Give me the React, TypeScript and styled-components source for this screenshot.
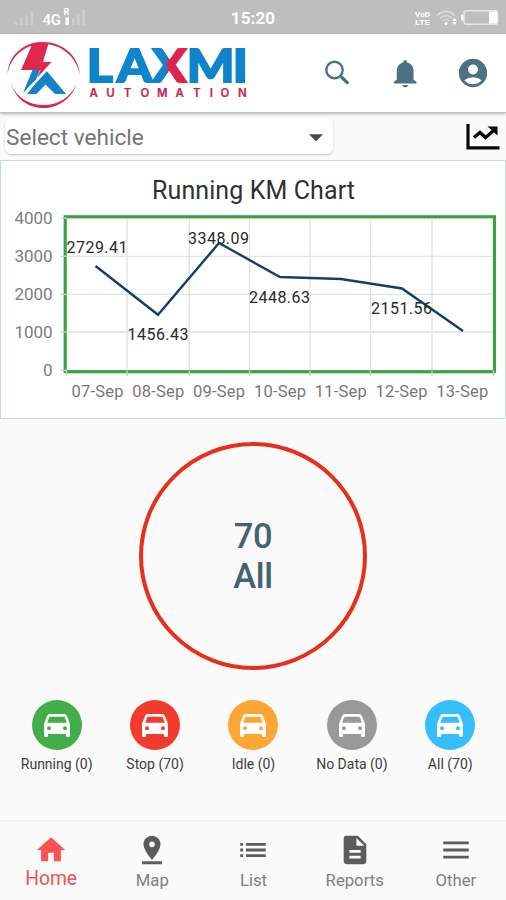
import React from "react";
import styled, { createGlobalStyle } from "styled-components";
import {
  MdAccountCircle,
  MdArrowDropDown,
  MdDescription,
  MdHome,
  MdList,
  MdMenu,
  MdPinDrop,
} from "react-icons/md";

const GlobalStyle = createGlobalStyle`
  *, *::before, *::after { box-sizing: border-box; }
  body { margin: 0; background: #fafafa; font-family: Roboto, "Liberation Sans", sans-serif; }
`;

const Screen = styled.div`
  width: 506px;
  height: 900px;
  display: flex;
  flex-direction: column;
  background: #fafafa;
  overflow: hidden;
`;

const StatusBar = styled.header`
  height: 34px;
  flex: none;
  display: grid;
  grid-template-columns: 1fr auto 1fr;
  align-items: center;
  padding: 2px 4px 0 12px;
  background: #bebebe;
  color: #fff;
`;

const Clock = styled.time`
  font-size: 17px;
  font-weight: 700;
  letter-spacing: 0.1px;
  margin: 0 4px 0 -4px;
`;

const StatusRight = styled.div`
  justify-self: end;
  display: flex;
`;

const AppBar = styled.div`
  height: 79px;
  flex: none;
  display: flex;
  align-items: center;
  justify-content: space-between;
  padding: 0 16px 0 0;
  background: #fff;
  border-bottom: 1px solid #c2c2c2;
  box-shadow: 0 1px 3px rgba(0, 0, 0, 0.28);
  z-index: 1;
`;

const Actions = styled.div`
  display: flex;
  gap: 34px;
  color: #4b7182;
`;

const IconButton = styled.button`
  display: flex;
  padding: 0;
  border: 0;
  background: none;
  color: inherit;
`;

const FilterRow = styled.div`
  height: 47px;
  flex: none;
  display: flex;
  align-items: flex-start;
  justify-content: space-between;
  padding: 5px 6px 0 5px;
`;

const Select = styled.div`
  width: 328px;
  height: 36px;
  display: flex;
  align-items: center;
  justify-content: space-between;
  padding: 2px 0 0 1px;
  border-radius: 6px;
  background: #fff;
  box-shadow: 0 1px 2px rgba(0, 0, 0, 0.22);
  color: #747474;
  font-size: 22.6px;
`;

const Arrow = styled(MdArrowDropDown)`
  color: #4a4a4a;
`;

const Trend = styled.div`
  display: flex;
  padding-top: 4px;
`;

const ChartCard = styled.section`
  height: 259px;
  flex: none;
  border: 1.5px solid #cbdfcd;
  background: #fff;
`;

const Summary = styled.section`
  flex: 1;
  display: flex;
  justify-content: center;
  padding-top: 23px;
`;

const Ring = styled.div`
  width: 228px;
  height: 228px;
  display: flex;
  flex-direction: column;
  align-items: center;
  justify-content: center;
  border: 4.4px solid #e6301b;
  border-radius: 50%;
  color: #45626e;
  font-size: 34.5px;
  line-height: 40px;
  font-weight: 500;
  letter-spacing: -0.4px;
  text-align: center;
`;

const StatusList = styled.ul`
  height: 120px;
  flex: none;
  display: grid;
  grid-template-columns: repeat(5, 98.4px);
  margin: 0;
  padding: 0 0 0 7.5px;
  list-style: none;
`;

const StatusItem = styled.li`
  display: flex;
  flex-direction: column;
  align-items: center;
  gap: 5px;
  color: #3d3d3d;
  font-size: 14px;
  line-height: 18px;
  white-space: nowrap;
`;

const Badge = styled.span<{ $color: string }>`
  width: 50px;
  height: 50px;
  display: flex;
  align-items: center;
  justify-content: center;
  border-radius: 50%;
  background: ${({ $color }) => $color};
  color: #fff;
`;

const BottomNav = styled.nav`
  height: 80px;
  flex: none;
  display: grid;
  grid-template-columns: repeat(5, 1fr);
  border-top: 2px solid #f3f3f3;
`;

const NavItem = styled.a<{ $active?: boolean }>`
  display: flex;
  flex-direction: column;
  align-items: center;
  padding: 11px 0 0 1px;
  color: ${({ $active }) => ($active ? "#ff5252" : "#5c5c5c")};
`;

const NavLabel = styled.span<{ $active?: boolean }>`
  margin-top: ${({ $active }) => ($active ? "1px" : "3px")};
  color: ${({ $active }) => ($active ? "#ee5355" : "#808080")};
  font-size: ${({ $active }) => ($active ? "19.3px" : "16.7px")};
  line-height: 22px;
`;

const points: [number, number][] = [
  [95.5, 266], [158, 314.8], [219, 243], [280, 277], [341, 279], [402, 288.5], [463, 331],
];
const dates = ["07-Sep", "08-Sep", "09-Sep", "10-Sep", "11-Sep", "12-Sep", "13-Sep"];
const values = [
  { text: "2729.41", x: 97, y: 252.5 },
  { text: "1456.43", x: 158, y: 340 },
  { text: "3348.09", x: 218.5, y: 243.5 },
  { text: "2448.63", x: 279.5, y: 302.5 },
  { text: "2151.56", x: 401.5, y: 314 },
];
const levels = [
  { text: "4000", y: 218 },
  { text: "3000", y: 256.3 },
  { text: "2000", y: 294.4 },
  { text: "1000", y: 332 },
  { text: "0", y: 370.3 },
];
const columns = [127, 189.3, 249.5, 310, 370.4, 432];

function SignalIcons() {
  return (
    <svg width="80" height="30" viewBox="12 3 80 30" fill="#fff">
      <g opacity=".25">
        <rect x="15" y="22" width="2.4" height="3" />
        <rect x="20" y="18" width="2.4" height="7" />
        <rect x="25.5" y="15" width="2.4" height="10" />
        <rect x="31" y="11.5" width="2.4" height="13.5" />
        <rect x="72" y="18" width="2.4" height="7" />
        <rect x="77" y="14" width="2.4" height="11" />
        <rect x="82.5" y="9" width="2.4" height="16" />
      </g>
      <text x="42.5" y="24.5" fontSize="15" fontWeight="500" textLength="18.5">4G</text>
      <text x="63.5" y="15" fontSize="9" fontWeight="700">R</text>
      <rect x="65.5" y="17.5" width="3.4" height="7.5" />
    </svg>
  );
}

function BatteryIcons() {
  return (
    <svg width="92" height="30" viewBox="410 3 92 30" fill="#fff">
      <text x="415" y="16.5" fontSize="8" fontWeight="700" textLength="15" lengthAdjust="spacingAndGlyphs">VoD</text>
      <text x="415" y="24.7" fontSize="8" fontWeight="700" textLength="15" lengthAdjust="spacingAndGlyphs">LTE</text>
      <g fill="none" stroke="#fff" strokeWidth="1.2" opacity=".5">
        <path d="M437 15.500q9-8 18 0M440 18.300q6-5.200 12 0M443 21q3-2.500 6 0" />
      </g>
      <circle cx="446" cy="23.500" r="1.500" />
      <path d="M454.500 18l2.300 3h-4.600zM454.500 25l2.300-3h-4.600z" />
      <rect x="464" y="10.800" width="33.500" height="13.400" rx="2.500" fill="none" stroke="#fff" strokeWidth="1.500" opacity=".65" />
      <rect x="461" y="14.500" width="2.400" height="6" rx="1" />
      <rect x="489" y="11.500" width="8.300" height="12" rx="1" />
    </svg>
  );
}

function Logo() {
  return (
    <svg width="256" height="78" viewBox="0 34 256 78">
      <defs>
        <linearGradient id="brand" gradientUnits="userSpaceOnUse" x1="0" x2="216" y1="0" y2="0">
          <stop offset=".717" stopColor="#0d84cb" />
          <stop offset=".717" stopColor="#de2352" />
          <stop offset=".809" stopColor="#de2352" />
          <stop offset=".809" stopColor="#0d84cb" />
        </linearGradient>
      </defs>
      <path d="M7.500 74C8.500 55 24 42 43 42s35.500 13 37 33C76 56 61 44 43 44S11 56 7.500 74z" fill="#cf2a52" />
      <path d="M11 84c5 15 17 24 32.500 24S72 98 76.500 84C70 98 58 105 43.500 105S17 98 11 84z" fill="#cf2a52" />
      <path d="M32.500 43.500Q40 41.500 48.500 43.500L43 62H51.500L37 78 40.500 70H21z" fill="#e0284f" />
      <path d="M32.500 70H40L36 79.500 23 93z" fill="#1484ca" />
      <path d="M27 94L46 70 66 94H55L45.500 84.500 36.500 94z" fill="#1484ca" />
      <path d="M23 95.500L48 68.500" stroke="#fff" strokeWidth="2" />
      <text
        transform="translate(0 81.500) scale(1.08 1)" x="80.300 108.300 141 173 215.500" y="0"
        fill="url(#brand)" stroke="url(#brand)" strokeWidth="1.800"
        fontFamily="Lato, sans-serif" fontWeight="900" fontSize="46.500"
      >
        LAXMI
      </text>
      <text
        x="89.500 106.200 123.800 140.500 157 175.500 193 209.800 220.500 238" y="97.300"
        fill="#c92353" stroke="#c92353" strokeWidth=".2"
        fontFamily="Inter, sans-serif" fontWeight="600" fontSize="11.500"
      >
        AUTOMATION
      </text>
    </svg>
  );
}

function SearchIcon() {
  return (
    <svg width="34" height="34" viewBox="320.500 56 34 34" fill="none" stroke="currentColor">
      <circle cx="335" cy="70" r="8.200" strokeWidth="2.400" />
      <path d="M340.500 75.500l2 2" strokeWidth="2.400" />
      <path d="M342 77l6.700 6.600" strokeWidth="3.300" />
    </svg>
  );
}

function BellIcon() {
  return (
    <svg width="34" height="34" viewBox="388.500 56 34 34" fill="currentColor">
      <path d="M405.700 60c1 0 1.700.8 1.700 2.200 4 1 6.600 4.300 6.600 8.300V79.500l3 2.500v1.500H394.300V82l3-2.500V70.500c0-4 2.700-7.300 6.700-8.300 0-1.400.7-2.200 1.700-2.200zM402.800 85h5.800c-.4 1.500-1.500 2.300-2.900 2.300s-2.500-.8-2.900-2.300z" />
    </svg>
  );
}

function CarIcon() {
  return (
    <svg width="26" height="23" viewBox="0 0 26 23" fill="currentColor">
      <path
        fillRule="evenodd"
        d="M5.800 0H20.200Q22.300 0 23 2L26 10V21.700Q26 23 24.700 23H23.200Q21.900 23 21.900 21.700V20H4.100V21.700Q4.100 23 2.800 23H1.300Q0 23 0 21.700V10L3 2Q3.700 0 5.800 0zM5.500 2.700L3.200 8.800H22.800L20.500 2.700zM5 12.300a2 2 0 1 0 0 4 2 2 0 1 0 0-4zM21 12.300a2 2 0 1 0 0 4 2 2 0 1 0 0-4z"
      />
    </svg>
  );
}

function TrendIcon() {
  return (
    <svg width="35" height="30" viewBox="465 124 35 30" fill="none" stroke="#080808">
      <path d="M468 126v23.800h31.500" strokeWidth="3.200" />
      <path d="M474 139.500l6-5 5.500 5 10-8.500" strokeWidth="3.400" />
      <path d="M487.500 128.500h10v9z" fill="#080808" stroke="none" />
    </svg>
  );
}

function KmChart() {
  return (
    <svg width="503" height="256" viewBox="1 161 503 256">
      <text x="253.500" y="198.500" textAnchor="middle" fontSize="25" textLength="203" fill="#303030">
        Running KM Chart
      </text>
      <g stroke="#e1e3e3" strokeWidth="1.300">
        {columns.map((x) => <path key={x} d={`M${x} 219V370`} />)}
        {levels.slice(1, 4).map((l) => <path key={l.y} d={`M67 ${l.y}H493`} />)}
      </g>
      <rect x="65.200" y="216.800" width="429.300" height="154.900" fill="none" stroke="#3ba044" strokeWidth="3.200" />
      <g stroke="#c7cdc7" strokeWidth="1.400">
        {[66.5, ...columns, 493.5].map((x) => <path key={x} d={`M${x} 370.500V376`} />)}
        {levels.map((l) => <path key={l.y} d={`M61 ${l.y}h6`} />)}
      </g>
      <g fontSize="17" fill="#7d7d7d" textAnchor="end">
        {levels.map((l) => (
          <text key={l.text} x="52.500" y={l.y + 6} textLength={l.text.length * 9.5}>{l.text}</text>
        ))}
      </g>
      <g fontSize="16.500" fill="#777" textAnchor="middle">
        {dates.map((d, i) => (
          <text key={d} x={97.5 + i * 60.8} y="397" textLength="52">{d}</text>
        ))}
      </g>
      <polyline points={points.map((p) => p.join(",")).join(" ")} fill="none" stroke="#153f6b" strokeWidth="2.400" />
      <g fontSize="16" fill="#292929" textAnchor="middle">
        {values.map((v) => <text key={v.text} x={v.x} y={v.y} textLength="61">{v.text}</text>)}
      </g>
    </svg>
  );
}

const statuses = [
  { label: "Running (0)", color: "#43ad49" },
  { label: "Stop (70)", color: "#f23b2c" },
  { label: "Idle (0)", color: "#fba738" },
  { label: "No Data (0)", color: "#999" },
  { label: "All (70)", color: "#36bdfb" },
];

const tabs = [
  { label: "Home", Icon: MdHome, active: true },
  { label: "Map", Icon: MdPinDrop },
  { label: "List", Icon: MdList },
  { label: "Reports", Icon: MdDescription },
  { label: "Other", Icon: MdMenu },
];

export default function App() {
  return (
    <Screen>
      <GlobalStyle />
      <StatusBar>
        <SignalIcons />
        <Clock>15:20</Clock>
        <StatusRight><BatteryIcons /></StatusRight>
      </StatusBar>
      <AppBar>
        <Logo />
        <Actions>
          <IconButton aria-label="Search"><SearchIcon /></IconButton>
          <IconButton aria-label="Notifications"><BellIcon /></IconButton>
          <IconButton aria-label="Account"><MdAccountCircle size={34} /></IconButton>
        </Actions>
      </AppBar>
      <FilterRow>
        <Select>
          Select vehicle
          <Arrow size={34} />
        </Select>
        <Trend><TrendIcon /></Trend>
      </FilterRow>
      <ChartCard><KmChart /></ChartCard>
      <Summary>
        <Ring>
          <span>70</span>
          <span>All</span>
        </Ring>
      </Summary>
      <StatusList>
        {statuses.map((s) => (
          <StatusItem key={s.label}>
            <Badge $color={s.color}><CarIcon /></Badge>
            {s.label}
          </StatusItem>
        ))}
      </StatusList>
      <BottomNav>
        {tabs.map(({ label, Icon, active }) => (
          <NavItem key={label} $active={active}>
            <Icon size={34} />
            <NavLabel $active={active}>{label}</NavLabel>
          </NavItem>
        ))}
      </BottomNav>
    </Screen>
  );
}
